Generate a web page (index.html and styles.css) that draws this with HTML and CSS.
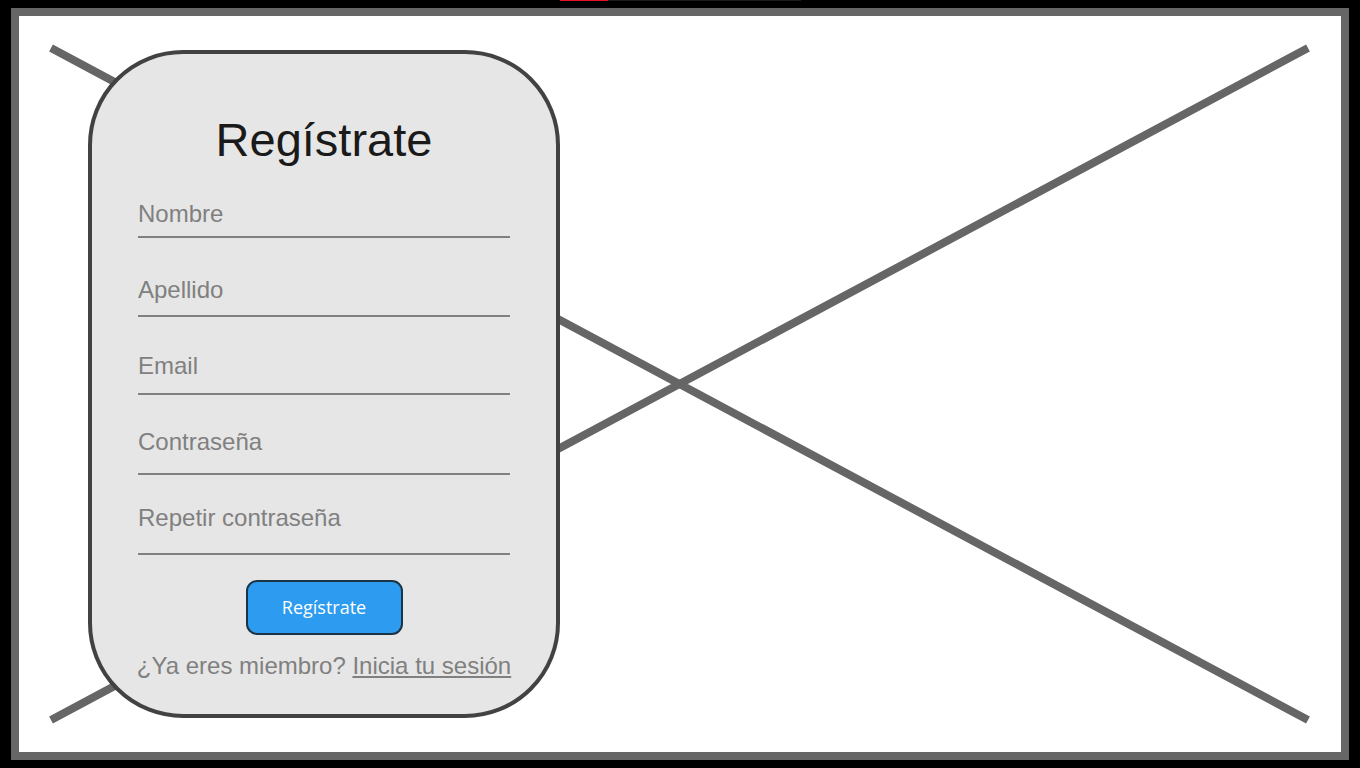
FILE: index.html
```html
<!DOCTYPE html>
<html lang="es">
<head>
  <meta charset="utf-8">
  <meta name="viewport" content="width=device-width, initial-scale=1">
  <title>Regístrate</title>
  <link rel="stylesheet" href="styles.css">
</head>
<body class="page">
  <div class="strip"><div class="strip-track"><div class="strip-fill"></div></div></div>
  <main class="stage">
    <svg class="stage-cross" viewBox="0 0 1322 736" preserveAspectRatio="none" aria-hidden="true">
      <path d="M32 32 1289 704M32 704 1289 32" fill="none" stroke="#666" stroke-width="8"/>
    </svg>
    <form class="card">
      <h1 class="card-title">Regístrate</h1>
      <div class="fields">
        <input class="field" type="text" name="nombre" placeholder="Nombre" aria-label="Nombre">
        <input class="field field-apellido" type="text" name="apellido" placeholder="Apellido" aria-label="Apellido">
        <input class="field field-email" type="email" name="email" placeholder="Email" aria-label="Email">
        <input class="field field-clave" type="password" name="clave" placeholder="Contraseña" aria-label="Contraseña">
        <input class="field field-repetir" type="password" name="repetir" placeholder="Repetir contraseña" aria-label="Repetir contraseña">
      </div>
      <button class="submit" type="submit">Regístrate</button>
      <p class="login">¿Ya eres miembro? <a class="login-link" href="#">Inicia tu sesión</a></p>
    </form>
  </main>
</body>
</html>
```
FILE: styles.css
```css
* {
  box-sizing: border-box;
}

.page {
  margin: 0;
  min-height: 100vh;
  display: flex;
  flex-direction: column;
  background: #000;
  font-family: "Liberation Sans", Arial, sans-serif;
  font-size: 24px;
  line-height: 28px;
  color: #808080;
}

.strip {
  height: 8px;
  display: flex;
  justify-content: center;
  align-items: flex-start;
}

.strip-track {
  width: 241px;
  height: 1px;
  background: #1c1c1c;
}

.strip-fill {
  width: 20%;
  height: 1px;
  background: #e81123;
}

.stage {
  flex: 1;
  display: grid;
  margin: 0 11px 8px;
  border: 8px solid #666;
  background: #fff;
}

/* The cross and the card share one grid cell. */
.stage-cross,
.card {
  grid-area: 1 / 1;
}

.stage-cross {
  width: 100%;
  height: 100%;
  min-height: 0;
}

.card {
  z-index: 1;
  justify-self: start;
  align-self: center;
  width: 472px;
  max-width: 100%;
  margin: 34px 69px;
  padding: 58px 46px 34px;
  border: 4px solid #424242;
  border-radius: 95px;
  background: #e6e6e6;
  display: flex;
  flex-direction: column;
  align-items: center;
}

.card-title {
  margin: 0 0 32px;
  font-size: 47px;
  font-weight: 400;
  line-height: 56px;
  color: #1a1a1a;
}

.fields {
  width: 100%;
  display: grid;
  grid-auto-rows: 76px;
  align-items: start;
}

.field {
  width: 100%;
  margin: 0;
  padding: 0 0 8px;
  border: 0;
  border-bottom: 2px solid #808080;
  border-radius: 0;
  outline: 0;
  background: transparent;
  font: inherit;
  color: #1a1a1a;
}

.field::placeholder {
  color: #808080;
  opacity: 1;
}

.field-apellido {
  padding-bottom: 11px;
}

.field-email {
  padding-bottom: 13px;
}

.field-clave {
  padding-bottom: 17px;
}

.field-repetir {
  padding-bottom: 21px;
}

.submit {
  width: 157px;
  height: 55px;
  padding: 0 0 2px;
  border: 2px solid #1b3446;
  border-radius: 11px;
  background: #2d9bf0;
  font-family: "Open Sans", sans-serif;
  font-size: 18px;
  line-height: 24px;
  color: #fff;
}

.login {
  margin: 17px 0 0;
  white-space: nowrap;
}

.login-link {
  color: inherit;
  text-decoration: underline;
}
```
